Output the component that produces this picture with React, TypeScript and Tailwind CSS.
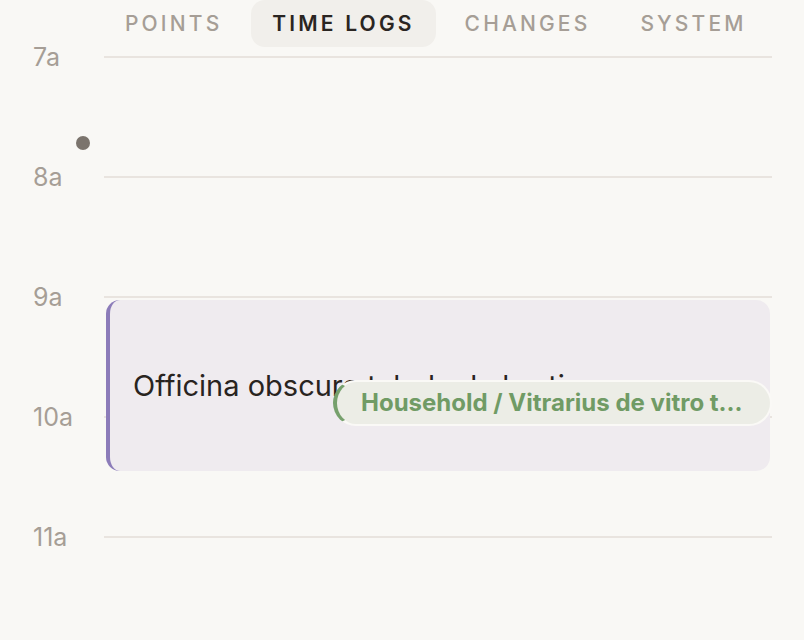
const tabs = ["POINTS", "TIME LOGS", "CHANGES", "SYSTEM"];
const hours = ["7a", "8a", "9a", "10a", "11a"];

export default function App() {
  return (
    <div className="w-[804px] h-[640px] overflow-hidden bg-[#f9f8f5] font-['Inter',sans-serif]">
      <div className="flex gap-2 pl-[104px] h-[47px]">
        {tabs.map((t) => (
          <div
            key={t}
            className={
              t === "TIME LOGS"
                ? "flex items-center px-[21px] rounded-[14px] bg-[#f1efeb] text-[21px] font-semibold tracking-[0.15em] text-[#2a2522]"
                : "flex items-center px-[21px] rounded-[14px] text-[21px] font-medium tracking-[0.15em] text-[#a69e96]"
            }
          >
            {t}
          </div>
        ))}
      </div>

      <div className="relative pt-[9px]">
        {hours.map((h) => (
          <div key={h} className="flex h-[120px]">
            <div className="w-[104px] pl-[33px] -mt-[13px] h-[28px] text-[25px] leading-[28px] text-[#a69e96]">
              {h}
            </div>
            <div className="flex-1 mr-[32px] h-[2px] bg-[#e9e4df]" />
          </div>
        ))}

        <div className="absolute left-[76px] top-[89px] w-[14px] h-[14px] rounded-full bg-[#7b746d]" />

        <div className="absolute left-[106px] top-[253px] w-[664px] h-[171px] flex items-center pl-[23px] rounded-[14px] border-l-4 border-[#8c7cb9] bg-[#efebef]">
          <span className="text-[29px] text-[#29241f] whitespace-nowrap">
            Officina obscura tabula de hortis
          </span>
          <div className="absolute left-[223px] top-[80px] w-[439px] h-[46px] flex items-center pl-[24px] rounded-full border-2 border-l-[4px] border-[#faf9f6] border-l-[#76a06c] bg-[#ecede6]">
            <span className="text-[24px] font-bold text-[#709b65] whitespace-nowrap">
              Household / Vitrarius de vitro t...
            </span>
          </div>
        </div>
      </div>
    </div>
  );
}
